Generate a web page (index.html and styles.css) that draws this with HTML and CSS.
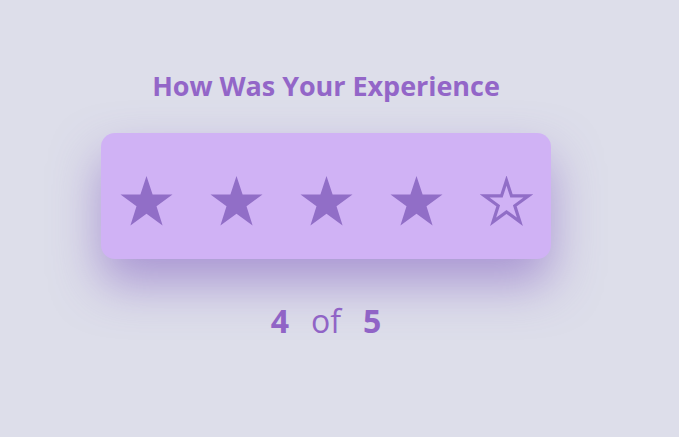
FILE: index.html
```html
<!DOCTYPE html>
<html>
<head>
<meta charset="utf-8">
<link rel="stylesheet" href="styles.css">
</head>
<body>
<div class="wrap">
  <h1 class="title">How Was Your Experience</h1>
  <div class="card">
    <svg class="star" viewBox="0 0 52 50"><polygon points="26,0 32.1,18.6 52,18.6 36,30.3 42.1,49.5 26,37.8 9.9,49.5 16,30.3 0,18.6 19.9,18.6"/></svg>
    <svg class="star" viewBox="0 0 52 50"><polygon points="26,0 32.1,18.6 52,18.6 36,30.3 42.1,49.5 26,37.8 9.9,49.5 16,30.3 0,18.6 19.9,18.6"/></svg>
    <svg class="star" viewBox="0 0 52 50"><polygon points="26,0 32.1,18.6 52,18.6 36,30.3 42.1,49.5 26,37.8 9.9,49.5 16,30.3 0,18.6 19.9,18.6"/></svg>
    <svg class="star" viewBox="0 0 52 50"><polygon points="26,0 32.1,18.6 52,18.6 36,30.3 42.1,49.5 26,37.8 9.9,49.5 16,30.3 0,18.6 19.9,18.6"/></svg>
    <svg class="star empty" viewBox="0 0 52 50"><polygon points="26,4.5 31,19.9 48,19.9 34.3,29.8 39.4,45.8 26,36 12.6,45.8 17.7,29.8 4,19.9 21,19.9"/></svg>
  </div>
  <div class="score"><b>4</b><span class="of">of</span><b>5</b></div>
</div>
</body>
</html>
```
FILE: styles.css
```css
html, body {
  margin: 0;
  padding: 0;
  background: #dddeea;
  font-family: "Open Sans", "Noto Sans", sans-serif;
}
.wrap {
  width: 652px;
  display: flex;
  flex-direction: column;
  align-items: center;
}
.title {
  margin: 68px 0 0 0;
  font-size: 27px;
  line-height: 36px;
  font-weight: 700;
  letter-spacing: -0.05px;
  color: #9366c8;
}
.card {
  margin-top: 29px;
  width: 450px;
  height: 126px;
  box-sizing: border-box;
  background: #d0b2f5;
  border-radius: 14px;
  box-shadow: 0 24px 48px rgba(120, 80, 190, 0.5);
  display: flex;
  align-items: center;
  justify-content: center;
  gap: 37px;
  padding-top: 10px;
}
.star {
  width: 53px;
  height: 50px;
  fill: #916ec7;
}
.star.empty {
  fill: none;
  stroke: #916ec7;
  stroke-width: 3.2;
}
.score {
  margin-top: 40px;
  font-size: 32px;
  line-height: 44px;
  color: #9064c6;
  display: flex;
  gap: 22px;
}
.score b { font-weight: 700; }
.of { font-weight: 400; }
```
